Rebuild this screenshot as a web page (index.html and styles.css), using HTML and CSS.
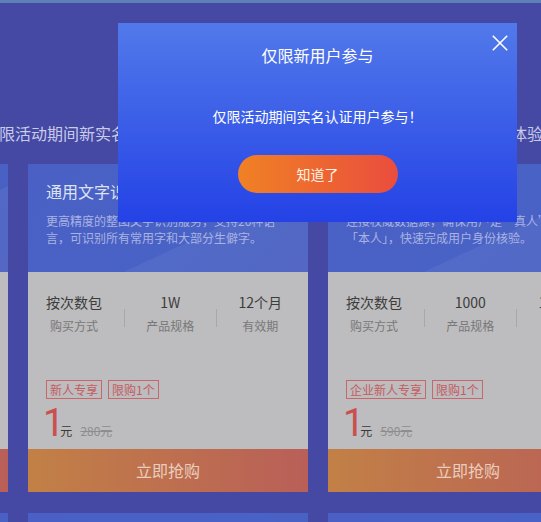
FILE: index.html
```html
<!DOCTYPE html>
<html lang="zh-CN">
<head>
    <meta charset="UTF-8">
    <meta name="viewport" content="width=device-width, initial-scale=1.0">
    <title>新用户专享</title>
    <link rel="stylesheet" href="styles.css">
</head>
<body>
    <div class="top-bar"></div>
    <p class="subtitle">仅限活动期间新实名认证用户购买，精选产品超低价格限时抢购，马上免费体验</p>

    <div class="cards">
        <div class="card">
            <div class="card-head">
                <h3 class="card-title">身份证识别</h3>
                <p class="card-desc">支持身份证正反面全部字段的识别，准确率高，识别速度快。</p>
            </div>
            <div class="card-body">
                <div class="stats">
                    <div class="stat"><div class="stat-value">按次数包</div><div class="stat-label">购买方式</div></div>
                    <div class="stat-line"></div>
                    <div class="stat"><div class="stat-value">1W</div><div class="stat-label">产品规格</div></div>
                    <div class="stat-line"></div>
                    <div class="stat"><div class="stat-value">12个月</div><div class="stat-label">有效期</div></div>
                </div>
                <div class="tags"><span class="tag">新人专享</span><span class="tag">限购1个</span></div>
                <div class="price"><span class="price-num">1</span><span class="price-unit">元</span><span class="price-old">150元</span></div>
            </div>
            <div class="card-btn">立即抢购</div>
        </div>

        <div class="card">
            <div class="card-head">
                <h3 class="card-title">通用文字识别（高精度版）</h3>
                <p class="card-desc">更高精度的整图文字识别服务，支持20种语言，可识别所有常用字和大部分生僻字。</p>
            </div>
            <div class="card-body">
                <div class="stats">
                    <div class="stat"><div class="stat-value">按次数包</div><div class="stat-label">购买方式</div></div>
                    <div class="stat-line"></div>
                    <div class="stat"><div class="stat-value">1W</div><div class="stat-label">产品规格</div></div>
                    <div class="stat-line"></div>
                    <div class="stat"><div class="stat-value">12个月</div><div class="stat-label">有效期</div></div>
                </div>
                <div class="tags"><span class="tag">新人专享</span><span class="tag">限购1个</span></div>
                <div class="price"><span class="price-num">1</span><span class="price-unit">元</span><span class="price-old">280元</span></div>
            </div>
            <div class="card-btn">立即抢购</div>
        </div>

        <div class="card">
            <div class="card-head">
                <h3 class="card-title">实名认证</h3>
                <p class="card-desc">连接权威数据源，确保用户是“真人”且是「本人」，快速完成用户身份核验。</p>
            </div>
            <div class="card-body">
                <div class="stats">
                    <div class="stat"><div class="stat-value">按次数包</div><div class="stat-label">购买方式</div></div>
                    <div class="stat-line"></div>
                    <div class="stat"><div class="stat-value">1000</div><div class="stat-label">产品规格</div></div>
                    <div class="stat-line"></div>
                    <div class="stat"><div class="stat-value">12个月</div><div class="stat-label">有效期</div></div>
                </div>
                <div class="tags"><span class="tag">企业新人专享</span><span class="tag">限购1个</span></div>
                <div class="price"><span class="price-num">1</span><span class="price-unit">元</span><span class="price-old">590元</span></div>
            </div>
            <div class="card-btn">立即抢购</div>
        </div>

        <!-- second row, mostly below the fold -->
        <div class="card">
            <div class="card-head"><h3 class="card-title">银行卡识别</h3></div>
        </div>
        <div class="card">
            <div class="card-head"><h3 class="card-title">人脸识别</h3></div>
        </div>
        <div class="card">
            <div class="card-head"><h3 class="card-title">语音识别</h3></div>
        </div>
    </div>

    <div class="dialog">
        <button class="dialog-close" aria-label="关闭">
            <svg width="16" height="16" viewBox="0 0 16 16"><path d="M0.8 0.8L15.2 15.2M15.2 0.8L0.8 15.2" stroke="#fff" stroke-width="1.6" fill="none"/></svg>
        </button>
        <h2 class="dialog-title">仅限新用户参与</h2>
        <p class="dialog-text">仅限活动期间实名认证用户参与！</p>
        <button class="dialog-btn">知道了</button>
    </div>
</body>
</html>
```

FILE: styles.css
```css
/* Reset & base */
*{margin:0;padding:0;box-sizing:border-box}
body{font-family:"Noto Sans CJK SC","Noto Sans",sans-serif;background:#4549a4;overflow:hidden;height:100vh}
.top-bar{height:3px;background:#5d80b6}
.subtitle{margin:119px 0 0 -17px;white-space:nowrap;font-size:16px;line-height:22px;color:#c8cbe9}

/* Product cards */
.cards{display:grid;grid-template-columns:repeat(3,280px);gap:21px 20px;margin:20px 0 0 -272px}
.card{overflow:hidden}
.card-head{height:108px;padding:16px 26px 0 18px;background:linear-gradient(155deg,transparent 64%,rgba(255,255,255,.05) 64%),linear-gradient(135deg,#4a60c4 0%,#4962c5 60%,#4a5fc0 100%)}
.card-title{font-size:16px;line-height:22px;font-weight:400;color:#dde2f3;white-space:nowrap}
.card-desc{margin-top:10px;font-size:12px;line-height:17px;color:#a9b3e3}
.card-body{height:177px;padding:20px 26px 0 18px;background:#bdbcbe}
.stats{display:flex;justify-content:space-between;align-items:flex-start}
.stat{text-align:center;white-space:nowrap}
.stat-value{font-size:14px;line-height:20px;color:#3c3c3c}
.stat-label{margin-top:5px;font-size:12px;line-height:17px;color:#787878}
.stat-line{width:1px;height:18px;margin-top:17px;background:#a8a8a8}
.tags{display:flex;gap:6px;margin-top:46px}
.tag{border:1px solid #c9666a;padding:0 3px;font-size:12px;line-height:17px;color:#c65b5e}
.price{display:flex;align-items:baseline;margin-top:5px;font-size:12px;line-height:17px}
.price-num{font-family:Roboto,"Liberation Sans",sans-serif;font-weight:400;font-size:38px;line-height:38px;color:#c9504f;margin:0 -4px 0 -3px}
.price-unit{color:#3a3a3a}
.price-old{margin-left:8px;color:#8d8d8d;text-decoration:line-through}
.card-btn{height:43px;line-height:43px;text-align:center;font-size:16px;color:#ebcdbe;background:linear-gradient(90deg,#c28046 0%,#b95f58 100%)}

/* Dialog */
.dialog{position:fixed;left:118px;top:23px;width:399px;height:199px;padding-top:21px;text-align:center;background:linear-gradient(180deg,#5279ea 0%,#2442e6 100%)}
.dialog-title{font-size:16px;line-height:22px;font-weight:400;color:#fff}
.dialog-text{margin-top:40px;font-size:14px;line-height:20px;color:#fff}
.dialog-btn{display:block;width:160px;height:38px;margin:29px auto 0;border:0;border-radius:19px;background:linear-gradient(90deg,#f08124 0%,#ea4d3e 100%);color:#fff3e6;font:14px/38px "Noto Sans CJK SC",sans-serif;cursor:pointer}
.dialog-close{position:absolute;top:12px;right:9px;width:16px;height:16px;border:0;background:none;cursor:pointer}
.dialog-close svg{display:block}
```
